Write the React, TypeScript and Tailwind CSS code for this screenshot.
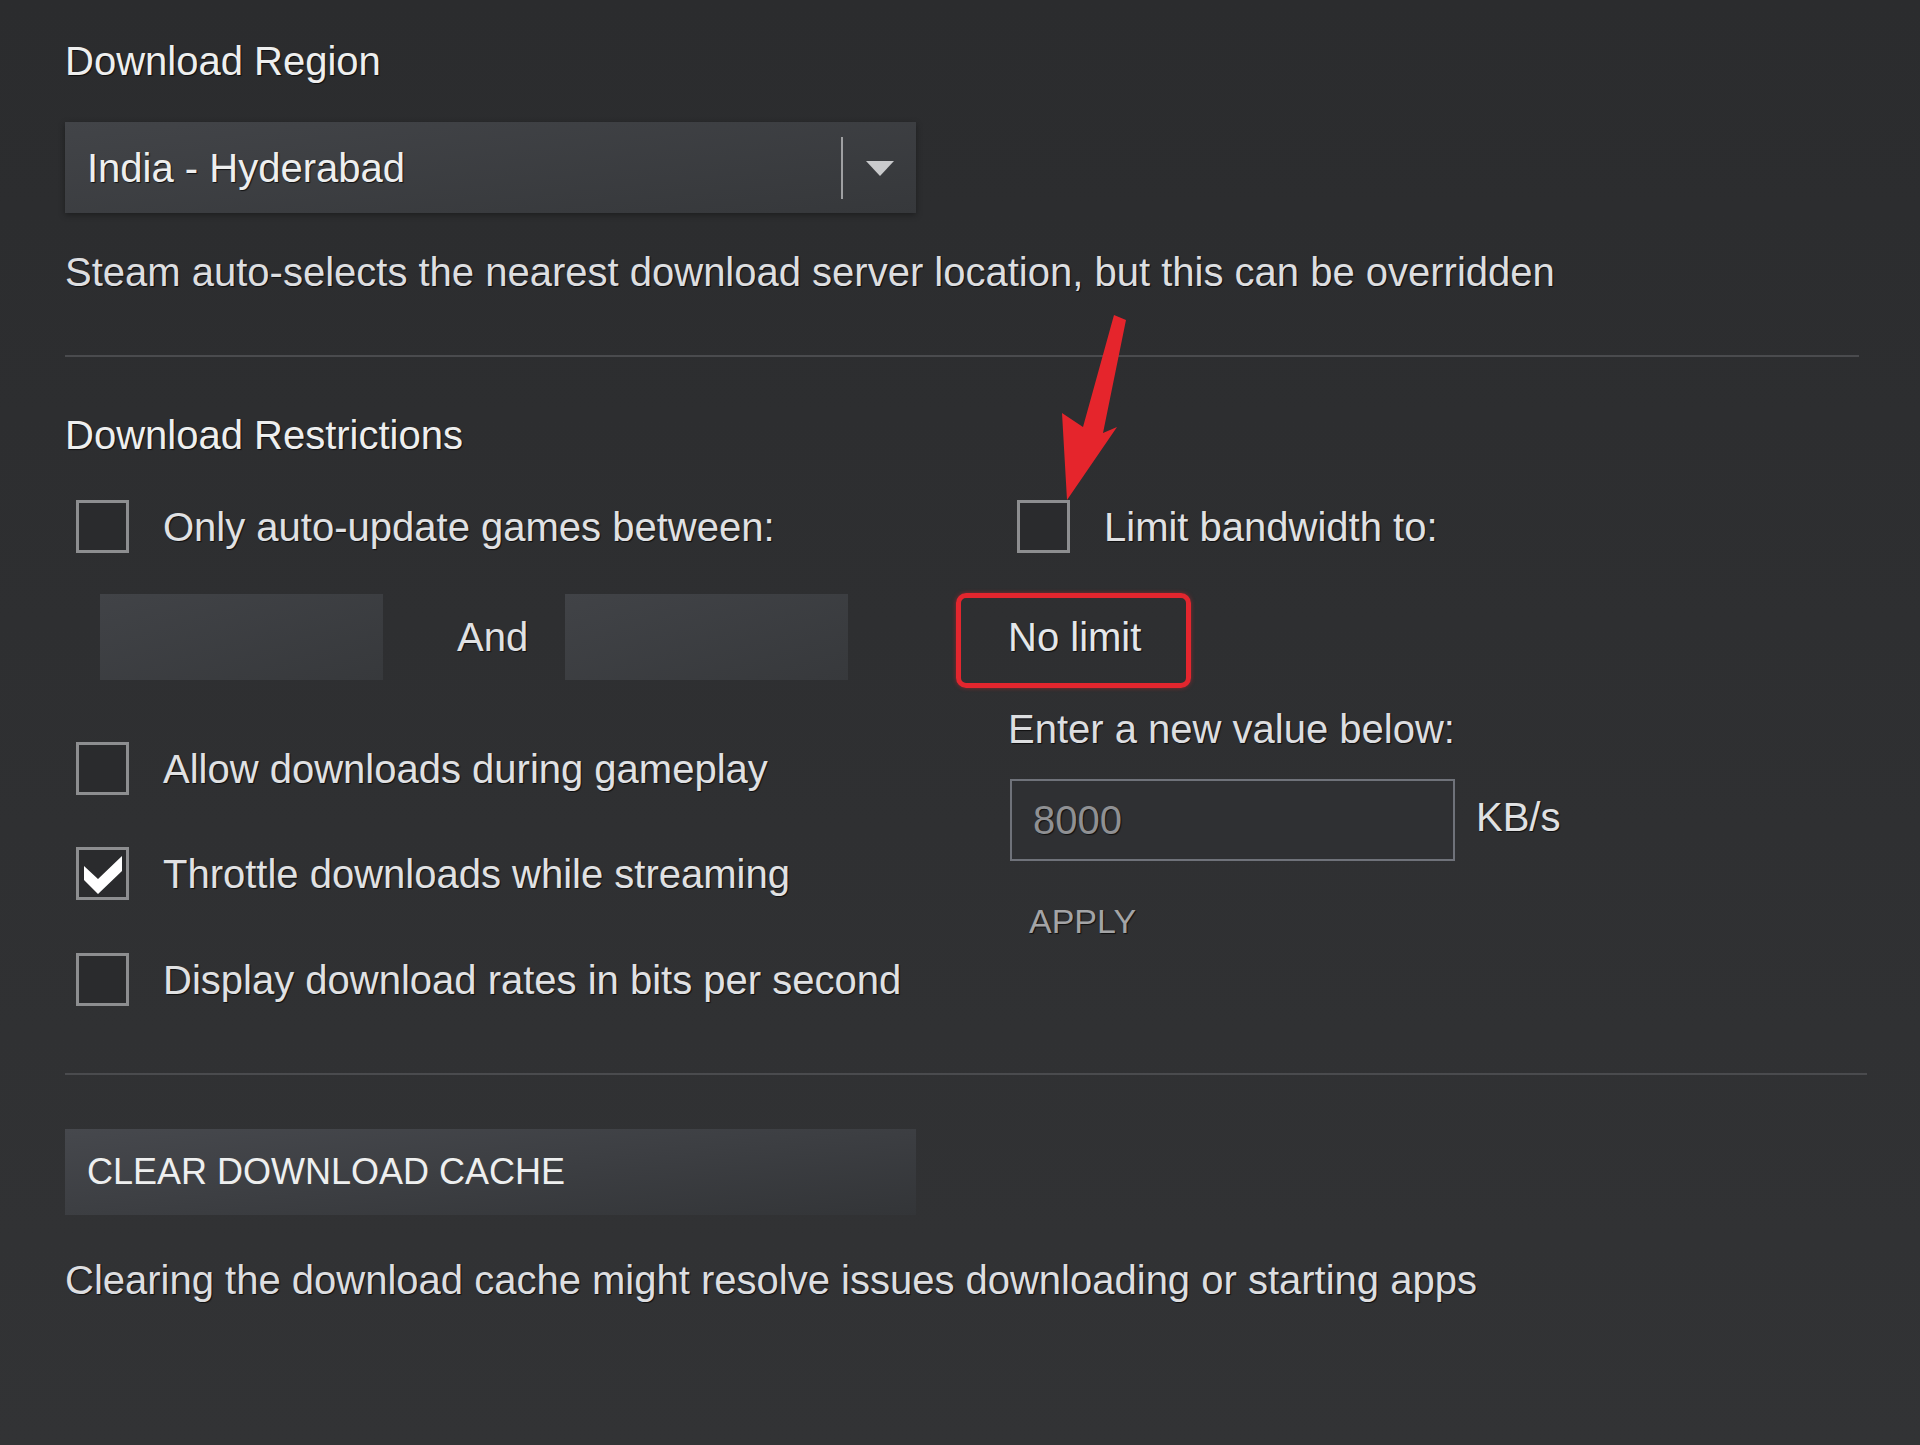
import React from "react";

const font = "font-['Liberation_Sans',Arial,sans-serif] [text-shadow:1px_1px_1px_rgba(0,0,0,0.7)]";

function Checkbox({ checked = false }: { checked?: boolean }) {
  return (
    <div className="w-[53px] h-[53px] shrink-0 border-[3px] border-[#8d8e90] bg-[#2a2b2d] flex items-center justify-center">
      {checked && (
        <svg width="47" height="47" viewBox="3 3 47 47">
          <polygon points="8,19 22,32 46,9 46,24 22,47 8,33" fill="#ffffff" />
        </svg>
      )}
    </div>
  );
}

function CheckRow({ label, checked, className = "" }: { label: string; checked?: boolean; className?: string }) {
  return (
    <div className={`flex items-center ${className}`}>
      <Checkbox checked={checked} />
      <span className="ml-[34px] text-[40px] leading-[46px] text-[#e0e1e3]">{label}</span>
    </div>
  );
}

export default function App() {
  return (
    <div className={`relative w-full h-[1445px] overflow-hidden bg-gradient-to-b from-[#2b2c2e] to-[#323335] ${font}`}>
      <div className="pl-[65px] pt-[38px]">
        <h2 className="text-[40px] leading-[46px] text-[#eeefef]">Download Region</h2>

        {/* region dropdown */}
        <div className="mt-[38px] w-[851px] h-[91px] flex items-center bg-gradient-to-br from-[#424448] to-[#36383b] shadow-[0_2px_6px_rgba(0,0,0,0.35)]">
          <span className="ml-[22px] flex-1 text-[40px] leading-[46px] text-[#eeefef]">India - Hyderabad</span>
          <div className="w-[2px] h-[62px] bg-[#9fa0a2]" />
          <div className="w-[73px] flex justify-center">
            <svg width="28" height="16" viewBox="0 0 28 16">
              <polygon points="0,1 28,1 14,16" fill="#c9cacc" />
            </svg>
          </div>
        </div>

        <p className="mt-[36px] text-[40px] leading-[46px] text-[#dddee0]">
          Steam auto-selects the nearest download server location, but this can be overridden
        </p>

        <div className="mt-[60px] w-[1794px] h-[2px] bg-[#4a4b4e]" />

        <h2 className="mt-[55px] text-[40px] leading-[46px] text-[#eeefef]">Download Restrictions</h2>

        <div className="mt-[42px] flex">
          {/* left column */}
          <div className="w-[943px]">
            <CheckRow className="ml-[11px]" label="Only auto-update games between:" />
            <div className="mt-[41px] ml-[35px] flex items-center">
              <div className="w-[283px] h-[86px] bg-gradient-to-br from-[#414347] to-[#37393c]" />
              <span className="ml-[74px] mr-[37px] text-[40px] leading-[46px] text-[#e0e1e3]">And</span>
              <div className="w-[283px] h-[86px] bg-gradient-to-br from-[#414347] to-[#37393c]" />
            </div>
            <CheckRow className="ml-[11px] mt-[62px]" label="Allow downloads during gameplay" />
            <CheckRow className="ml-[11px] mt-[52px]" label="Throttle downloads while streaming" checked />
            <CheckRow className="ml-[11px] mt-[53px]" label="Display download rates in bits per second" />
          </div>

          {/* right column */}
          <div className="flex-1">
            <CheckRow className="ml-[9px]" label="Limit bandwidth to:" />
            <div className="mt-[61px]">
              <span className="relative inline-block text-[40px] leading-[46px] text-[#e4e7ea]">
                No limit
                <span className="absolute left-[-52px] top-[-21px] w-[235px] h-[95px] border-[5px] border-[#e3262e] rounded-[10px] shadow-[0_0_4px_rgba(227,38,46,0.5)]" />
              </span>
            </div>
            <p className="mt-[46px] text-[40px] leading-[46px] text-[#dddee0]">Enter a new value below:</p>
            <div className="mt-[27px] flex items-center">
              <div className="ml-[2px] w-[445px] h-[82px] border-2 border-[#6f727a] bg-[#2f3033] flex items-center">
                <span className="ml-[21px] text-[40px] leading-[46px] text-[#8f9093]">8000</span>
              </div>
              <span className="ml-[21px] -mt-[6px] text-[40px] leading-[46px] text-[#e0e1e3]">KB/s</span>
            </div>
            <div className="mt-[40px] ml-[21px] text-[34px] leading-[40px] text-[#a3a4a6]">APPLY</div>
          </div>
        </div>

        <div className="mt-[67px] w-[1802px] h-[2px] bg-[#4a4b4e]" />

        <button className="mt-[54px] w-[851px] h-[86px] flex items-center bg-gradient-to-br from-[#46484d] to-[#333538] text-left">
          <span className="ml-[22px] text-[36px] leading-[42px] text-[#eeefef]">CLEAR DOWNLOAD CACHE</span>
        </button>

        <p className="mt-[42px] text-[40px] leading-[46px] text-[#dddee0]">
          Clearing the download cache might resolve issues downloading or starting apps
        </p>
      </div>

      {/* red annotation arrow */}
      <svg className="absolute left-[1050px] top-[300px]" width="90" height="210" viewBox="0 0 90 210">
        <polygon points="64,15 76,20 53,133 67,127 17,200 12,113 33,127" fill="#e5252c" />
      </svg>
    </div>
  );
}
